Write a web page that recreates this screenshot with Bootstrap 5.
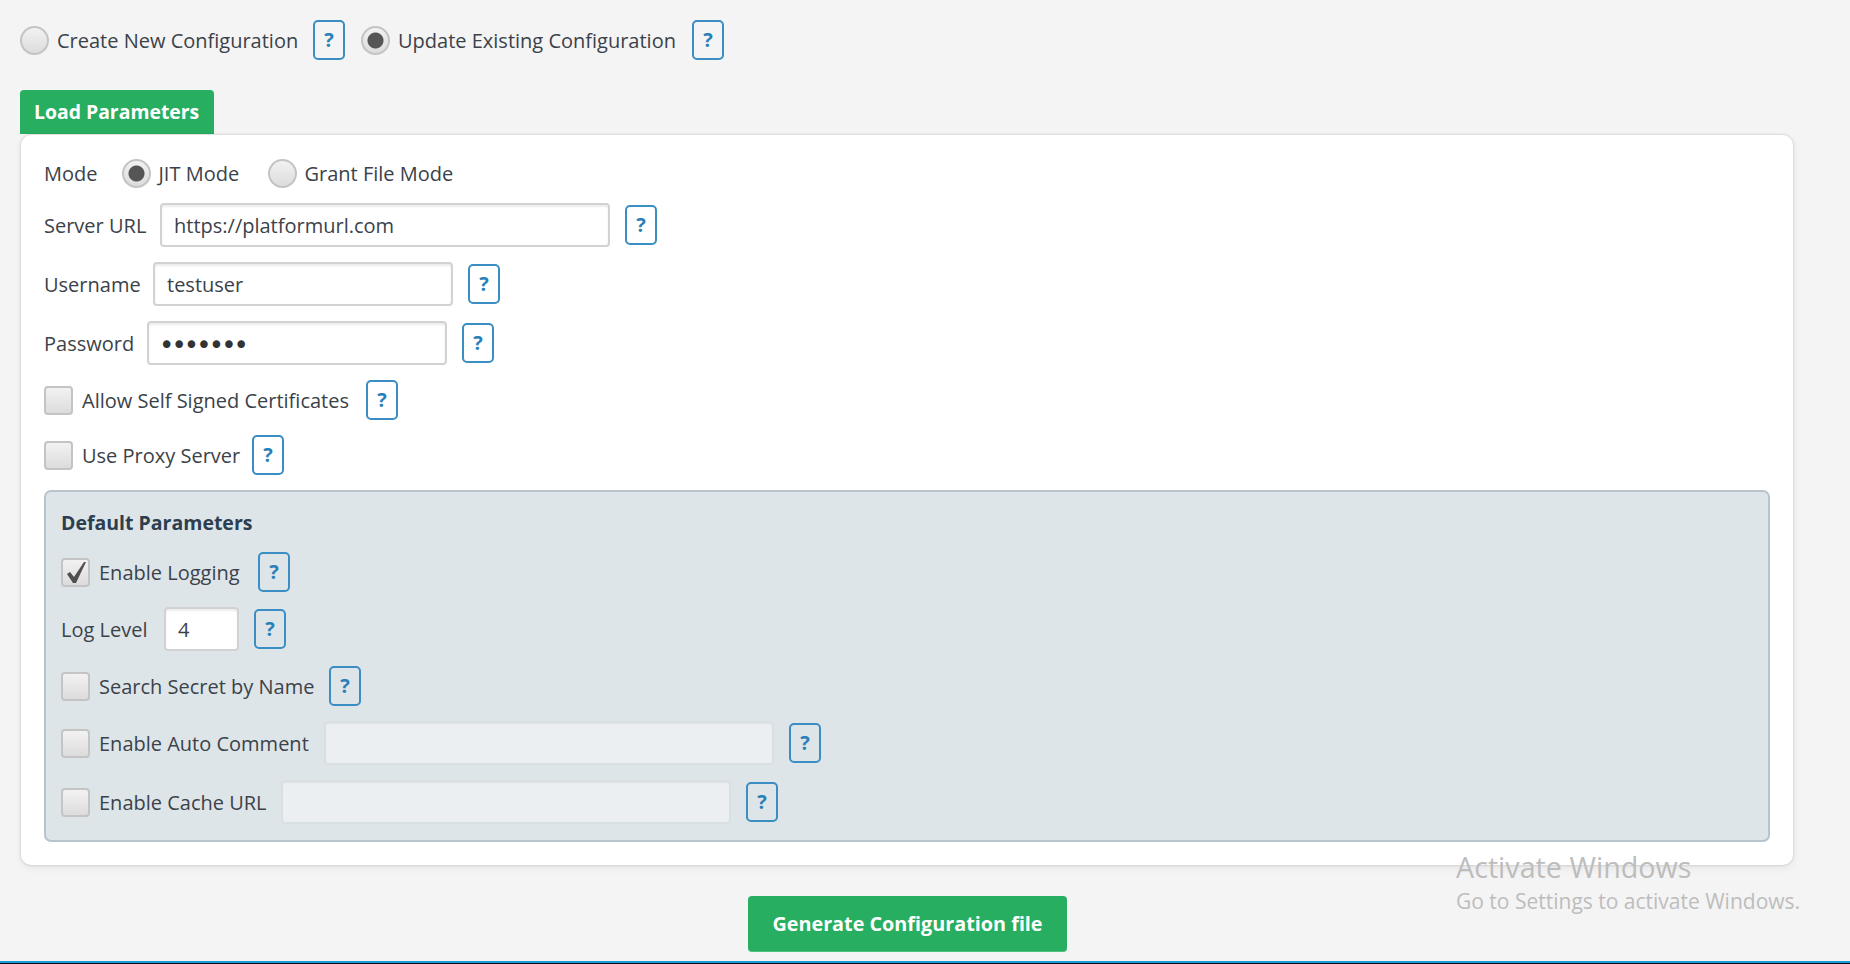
<!DOCTYPE html>
<html lang="en">
<head>
  <meta charset="UTF-8">
  <title>Configuration</title>
  <link href="https://cdn.jsdelivr.net/npm/bootstrap@5.3.3/dist/css/bootstrap.min.css" rel="stylesheet">
  <style>
    html, body { height: 964px; overflow: hidden; }
    body { background: #f4f4f4; color: #3b4249; font-family: "Open Sans", "Liberation Sans", sans-serif; font-size: 20px; }
    .page-wrap { padding: 20px 57px 0 20px; position: relative; height: 964px; }
    .top-row { height: 40px; }
    .mode-row { height: 30px; margin-bottom: 15px; }
    .field-row { display: flex; align-items: center; min-height: 40px; margin-bottom: 15px; }
    .field-row:last-child { margin-bottom: 0; }
    .field-label { margin: 0; padding-top: 2px; white-space: nowrap; }
    .lab-create { width: 241px; }
    .lab-update { width: 279px; }
    .lab-jit { width: 89px; margin-right: 20px; }
    .lab-url { width: 100px; }
    .lab-user { width: 93px; }
    .lab-pass { width: 87px; }
    .lab-self { width: 269px; }
    .lab-proxy { width: 155px; }
    .lab-log { width: 144px; }
    .lab-level { width: 87px; }
    .lab-search { width: 215px; }
    .lab-auto { width: 209px; }
    .lab-cache { width: 166px; }
    .help-btn { width: 32px; height: 40px; padding: 0; margin-left: 15px; flex: none; background: transparent; border: 2px solid #3a8ec4; border-radius: 5px; color: #2a80b9; font-weight: 700; font-size: 20px; line-height: 34px; }
    .form-check-input.pick { width: 29px; height: 29px; margin: 0 8px 0 0; flex: none; float: none; border: 2px solid #c4c4c4; background-color: #e6e6e6; background-image: linear-gradient(#f2f2f2, #dcdcdc); box-shadow: none; }
    .form-check-input.pick[type=checkbox] { border-radius: 4px; margin-right: 9px; }
    .form-check-input.pick[type=radio]:checked { background-color: #e6e6e6; border-color: #c4c4c4; background-image: radial-gradient(circle, #555 0 7.5px, transparent 8.5px), linear-gradient(#f2f2f2, #dcdcdc); }
    .form-check-input.pick[type=checkbox]:checked { background-color: #e6e6e6; border-color: #c4c4c4; background-size: auto; background-image: url("data:image/svg+xml,%3Csvg xmlns='http://www.w3.org/2000/svg' viewBox='0 0 25 25'%3E%3Cpath d='M4 14l3-2 4 5L21 2h2L13 23h-3z' fill='%234f4f4f'/%3E%3C/svg%3E"), linear-gradient(#f2f2f2, #dcdcdc); }
    .form-control.text-box { height: 44px; width: 300px; flex: none; padding: 0 12px; font-size: 20px; color: #3b4249; border: 2px solid #d2d2d2; border-radius: 4px; box-shadow: inset 0 2px 2px rgba(0, 0, 0, .08); background: #fff; }
    .form-control.text-box.wide { width: 450px; }
    .form-control.text-box.tiny { width: 75px; }
    .form-control.text-box[type=password] { font-family: "DejaVu Sans", sans-serif; font-size: 26px; letter-spacing: -2.9px; color: #333; padding: 3px 0 0 10px; }
    .form-control.text-box:disabled { background: #ebeff2; border-color: #d9e0e4; box-shadow: inset 0 1px 1px rgba(0, 0, 0, .05); }
    .load-tab { display: block; width: 194px; height: 44px; margin-top: 30px; padding: 0 14px; background: #27ae60; color: #fff; font-weight: 700; font-size: 19.4px; line-height: 44px; border: 0; border-radius: 4px 4px 0 0; white-space: nowrap; text-align: left; }
    .main-panel { margin: 1px 0 0 1px; height: 730px; padding: 23px 23px 22px; background: #fff; border: 0; border-radius: 10px; box-shadow: 0 0 3px rgba(0, 0, 0, .2), 0 3px 8px rgba(0, 0, 0, .06); }
    .defaults-box { height: 352px; padding: 16px 15px 0; background: #dee5e9; border: 2px solid #b7c4cb; border-radius: 7px; }
    .defaults-title { font-size: 19.5px; font-weight: 700; color: #2c3e50; line-height: 30px; margin-bottom: 14px; }
    .gen-btn { display: block; width: 319px; height: 56px; margin: 31px 0 0 728px; padding: 0; background: #27ae60; border: 0; border-bottom: 1px solid #4cc07c; border-radius: 4px; color: #fff; font-weight: 700; font-size: 19.8px; }
    .gen-btn:hover { background: #27ae60; color: #fff; }
    .bottom-strip { position: absolute; left: 0; right: 0; bottom: 0; height: 3px; background: #0a0f14; border-top: 2px solid #1a9ad6; }
    .activate-note { position: absolute; left: 1456px; top: 848px; color: #bdbdbd; font-size: 21px; line-height: 27px; white-space: nowrap; pointer-events: none; }
    .activate-first { font-size: 28.7px; line-height: 38px; margin-bottom: 2px; }
  </style>
</head>
<body>
<div class="page-wrap">

  <div class="d-flex align-items-center top-row">
    <input class="form-check-input pick" type="radio" name="cfg" id="cfgNew">
    <label class="field-label lab-create" for="cfgNew">Create New Configuration</label>
    <button type="button" class="btn help-btn me-3">?</button>
    <input class="form-check-input pick" type="radio" name="cfg" id="cfgUpd" checked>
    <label class="field-label lab-update" for="cfgUpd">Update Existing Configuration</label>
    <button type="button" class="btn help-btn">?</button>
  </div>

  <button type="button" class="load-tab">Load Parameters</button>

  <div class="card main-panel">
    <div class="d-flex align-items-center mode-row">
      <span class="field-label me-4">Mode</span>
      <input class="form-check-input pick" type="radio" name="mode" id="modeJit" checked>
      <label class="field-label lab-jit" for="modeJit">JIT Mode</label>
      <input class="form-check-input pick" type="radio" name="mode" id="modeGrant">
      <label class="field-label" for="modeGrant">Grant File Mode</label>
    </div>
    <div class="field-row">
      <label class="field-label lab-url me-3">Server URL</label>
      <input class="form-control text-box wide" type="text" value="https://platformurl.com">
      <button type="button" class="btn help-btn">?</button>
    </div>
    <div class="field-row">
      <label class="field-label lab-user me-3">Username</label>
      <input class="form-control text-box" type="text" value="testuser">
      <button type="button" class="btn help-btn">?</button>
    </div>
    <div class="field-row">
      <label class="field-label lab-pass me-3">Password</label>
      <input class="form-control text-box" type="password" value="testpwd">
      <button type="button" class="btn help-btn">?</button>
    </div>
    <div class="field-row">
      <input class="form-check-input pick" type="checkbox" id="selfSigned">
      <label class="field-label lab-self" for="selfSigned">Allow Self Signed Certificates</label>
      <button type="button" class="btn help-btn">?</button>
    </div>
    <div class="field-row">
      <input class="form-check-input pick" type="checkbox" id="useProxy">
      <label class="field-label lab-proxy" for="useProxy">Use Proxy Server</label>
      <button type="button" class="btn help-btn">?</button>
    </div>

    <div class="defaults-box">
      <div class="defaults-title">Default Parameters</div>
      <div class="field-row">
        <input class="form-check-input pick" type="checkbox" id="enableLog" checked>
        <label class="field-label lab-log" for="enableLog">Enable Logging</label>
        <button type="button" class="btn help-btn">?</button>
      </div>
      <div class="field-row">
        <label class="field-label lab-level me-3">Log Level</label>
        <input class="form-control text-box tiny" type="text" value="4">
        <button type="button" class="btn help-btn">?</button>
      </div>
      <div class="field-row">
        <input class="form-check-input pick" type="checkbox" id="searchName">
        <label class="field-label lab-search" for="searchName">Search Secret by Name</label>
        <button type="button" class="btn help-btn">?</button>
      </div>
      <div class="field-row">
        <input class="form-check-input pick" type="checkbox" id="autoComment">
        <label class="field-label lab-auto me-3" for="autoComment">Enable Auto Comment</label>
        <input class="form-control text-box wide" type="text" disabled>
        <button type="button" class="btn help-btn">?</button>
      </div>
      <div class="field-row">
        <input class="form-check-input pick" type="checkbox" id="cacheUrl">
        <label class="field-label lab-cache me-3" for="cacheUrl">Enable Cache URL</label>
        <input class="form-control text-box wide" type="text" disabled>
        <button type="button" class="btn help-btn">?</button>
      </div>
    </div>
  </div>

  <button type="button" class="btn gen-btn">Generate Configuration file</button>

  <div class="activate-note">
    <div class="activate-first">Activate Windows</div>
    <div>Go to Settings to activate Windows.</div>
  </div>
  <div class="bottom-strip"></div>
</div>
<script src="https://cdn.jsdelivr.net/npm/bootstrap@5.3.3/dist/js/bootstrap.bundle.min.js"></script>
</body>
</html>
